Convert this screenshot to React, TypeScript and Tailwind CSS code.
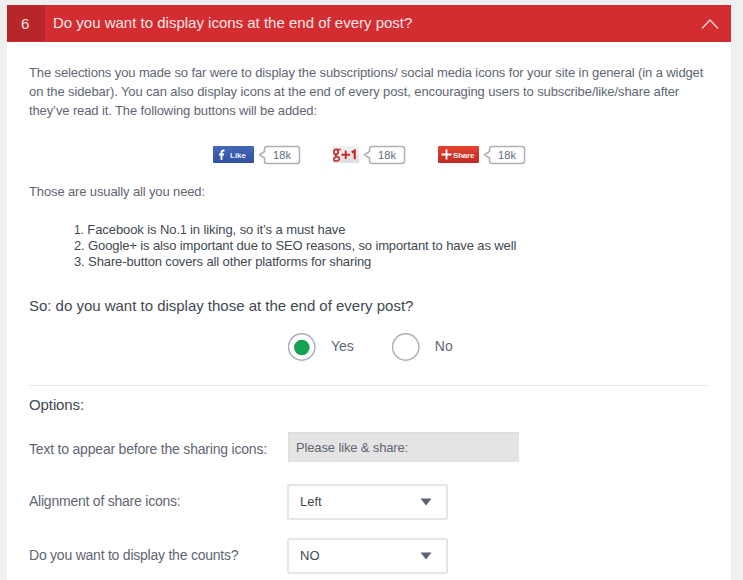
import type { ReactNode } from "react";

function Count() {
  return (
    <svg width="43" height="20" viewBox="0 0 43 20" className="shrink-0">
      <path
        d="M9 1.500H39A2.500 2.500 0 0 1 41.500 4V16A2.500 2.500 0 0 1 39 18.500H9A2.500 2.500 0 0 1 6.500 16V13L1.500 9.800L6.500 6.500V4A2.500 2.500 0 0 1 9 1.500Z"
        fill="#fff"
        stroke="#adb1b5"
        strokeWidth="1.500"
      />
      <text x="15" y="13.600" fontFamily="Liberation Sans, Arial, sans-serif" fontSize="11" fill="#5f6b7e" textLength="18">
        18k
      </text>
    </svg>
  );
}

function Share({ children }: { children: ReactNode }) {
  return (
    <div className="flex items-center">
      {children}
      <Count />
    </div>
  );
}

function Radio({ checked, label }: { checked?: boolean; label: string }) {
  return (
    <div className="flex items-center">
      <svg width="28" height="28" viewBox="0 0 28 28" className="shrink-0">
        <circle cx="13.700" cy="14" r="13.200" fill="#fff" stroke="#acb0b5" strokeWidth="1.500" />
        {checked && <circle cx="13.800" cy="14.500" r="7.800" fill="#12a252" />}
      </svg>
      <span className="mb-[2px] ml-[15px] text-[14px] leading-[20px] text-[#5f6673]">{label}</span>
    </div>
  );
}

function Select({ value }: { value: string }) {
  return (
    <div className="flex h-[36px] w-[161px] items-center justify-between rounded-[2px] border-2 border-[#e5e5e5] bg-white pr-[14px] pl-[11px]">
      <span className="text-[13px] leading-[18px] text-[#414951]">{value}</span>
      <svg width="12" height="8" viewBox="0 0 12 8">
        <path d="M.5 .5H11.500L6 7.500Z" fill="#5a6472" />
      </svg>
    </div>
  );
}

export default function App() {
  return (
    <div className="h-[580px] w-[743px] overflow-hidden bg-[#f0f0f0] pt-[5px] pl-[7px] font-['Liberation_Sans',Arial,sans-serif]">
      <div className="h-[575px] w-[724px] bg-white text-[13px] whitespace-nowrap text-[#5f6673]">
        <header className="flex h-[37px] bg-[#d32d31] text-[15px] text-[#f9e6e6]">
          <div className="h-[36px] w-[38px] bg-[#b7262a] pl-[14px] leading-[37px]">6</div>
          <h1 className="ml-[8px] leading-[36px]">Do you want to display icons at the end of every post?</h1>
          <svg className="mt-[13px] mr-[12px] ml-auto" width="18" height="12" viewBox="0 0 18 12" fill="none" stroke="#f6dfdf" strokeWidth="1.200">
            <path d="M1 10.500L9 2L17 10.500" />
          </svg>
        </header>
        <main className="flex flex-col pl-[22px]">
          <p className="mt-[21px] h-[57px] leading-[19px] tracking-[-0.112px]">
            The selections you made so far were to display the subscriptions/ social media icons for your site in general (in a widget
            <br />
            <span className="tracking-[-0.102px]">on the sidebar). You can also display icons at the end of every post, encouraging users to subscribe/like/share after</span>
            <br />
            they’ve read it. The following buttons will be added:
          </p>
          <div className="mt-[24px] flex h-[21px] items-center pl-[184px]">
            <Share>
              <svg width="41" height="17" viewBox="0 0 41 17" className="mr-[4px]">
                <defs>
                  <linearGradient id="blue" x2="0" y2="1">
                    <stop stopColor="#4468b8" />
                    <stop offset="1" stopColor="#3150a3" />
                  </linearGradient>
                </defs>
                <rect width="41" height="17" rx="1" fill="url(#blue)" />
                <path d="M11.500 4.500H10.500Q8.500 4.500 8.500 6.500V14M6 8.500H11" fill="none" stroke="#fff" strokeWidth="1.800" />
                <text x="17" y="11.500" fontSize="8" fontWeight="bold" fill="#eef2ff" textLength="16">Like</text>
              </svg>
            </Share>
            <div className="ml-[32px]">
              <Share>
                <svg width="26" height="17" viewBox="0 0 26 17" className="mr-[4px]">
                  <defs>
                    <linearGradient id="gray" x2="0" y2="1">
                      <stop stopColor="#f2f2f2" />
                      <stop offset="1" stopColor="#dfdfdf" />
                    </linearGradient>
                  </defs>
                  <rect width="26" height="17" fill="url(#gray)" />
                  <g fill="none" stroke="#c82929">
                    <ellipse cx="3" cy="5.800" rx="2.200" ry="2.500" strokeWidth="1.700" />
                    <path d="M4 3.600H7.800M3.500 8.300Q.8 9.300 3.500 10.300Q6.500 11.300 6.300 13Q6 15 3 15Q.6 15 .6 13.200Q.6 11.500 3.500 11.300" strokeWidth="1.500" />
                    <path d="M8.500 8.700H17M12.700 4.500V13" strokeWidth="1.900" />
                    <path d="M18.700 6.500L21.700 4.700V13.300" strokeWidth="2.200" />
                  </g>
                </svg>
              </Share>
            </div>
            <div className="ml-[32px]">
              <Share>
                <svg width="41" height="17" viewBox="0 0 41 17" className="mr-[4px]">
                  <defs>
                    <linearGradient id="red" x2="0" y2="1">
                      <stop stopColor="#e5422f" />
                      <stop offset="1" stopColor="#bd2925" />
                    </linearGradient>
                  </defs>
                  <rect width="41" height="17" rx="1" fill="url(#red)" />
                  <path d="M3.500 8.500H13.500M8.500 3.500V13.500" stroke="#fff" strokeWidth="1.800" />
                  <text x="15" y="11.500" fontSize="8" fontWeight="bold" fill="#fff0ed" textLength="21.500">Share</text>
                </svg>
              </Share>
            </div>
          </div>
          <p className="mt-[18px] h-[18px] leading-[18px] tracking-[-0.130px]">Those are usually all you need:</p>
          <ol className="mt-[21px] h-[48px] pl-[45px] leading-[16px] tracking-[-0.117px] text-[#414951]">
            <li className="tracking-[-0.090px]"><span className="text-[12px]">1.</span> Facebook is No.<span className="text-[12px]">1</span> in liking, so it’s a must have</li>
            <li>2. Google+ is also important due to SEO reasons, so important to have as well</li>
            <li>3. Share-button covers all other platforms for sharing</li>
          </ol>
          <h2 className="mt-[26px] h-[20px] text-[15px] leading-[20px] tracking-[-0.015px] text-[#414951]">So: do you want to display those at the end of every post?</h2>
          <div className="mt-[17px] flex h-[28px] pl-[259px]">
            <Radio checked label="Yes" />
            <div className="ml-[38px]"><Radio label="No" /></div>
          </div>
          <hr className="mt-[24px] h-px w-[680px] border-0 bg-[#e6e6e6]" />
          <h3 className="mt-[9px] h-[20px] text-[15px] leading-[20px] tracking-[-0.100px] text-[#414951]">Options:</h3>
          <div className="mt-[17px] flex h-[30px] items-center text-[14px]">
            <label className="mt-[5px] w-[259px] tracking-[-0.200px]">Text to appear before the sharing icons:</label>
            <div className="h-[30px] w-[231px] border-t-2 border-l border-[#dedede] bg-[#e4e4e4] pl-[7px] text-[13px] leading-[28px] tracking-[-0.140px]">Please like &amp; share:</div>
          </div>
          <div className="mt-[22px] flex h-[36px] items-center text-[14px]">
            <label className="mb-[2px] w-[258px] tracking-[-0.230px]">Alignment of share icons:</label>
            <Select value="Left" />
          </div>
          <div className="mt-[18px] flex h-[36px] items-center text-[14px]">
            <label className="mb-[2px] w-[258px] tracking-[-0.230px]">Do you want to display the counts?</label>
            <Select value="NO" />
          </div>
        </main>
      </div>
    </div>
  );
}
